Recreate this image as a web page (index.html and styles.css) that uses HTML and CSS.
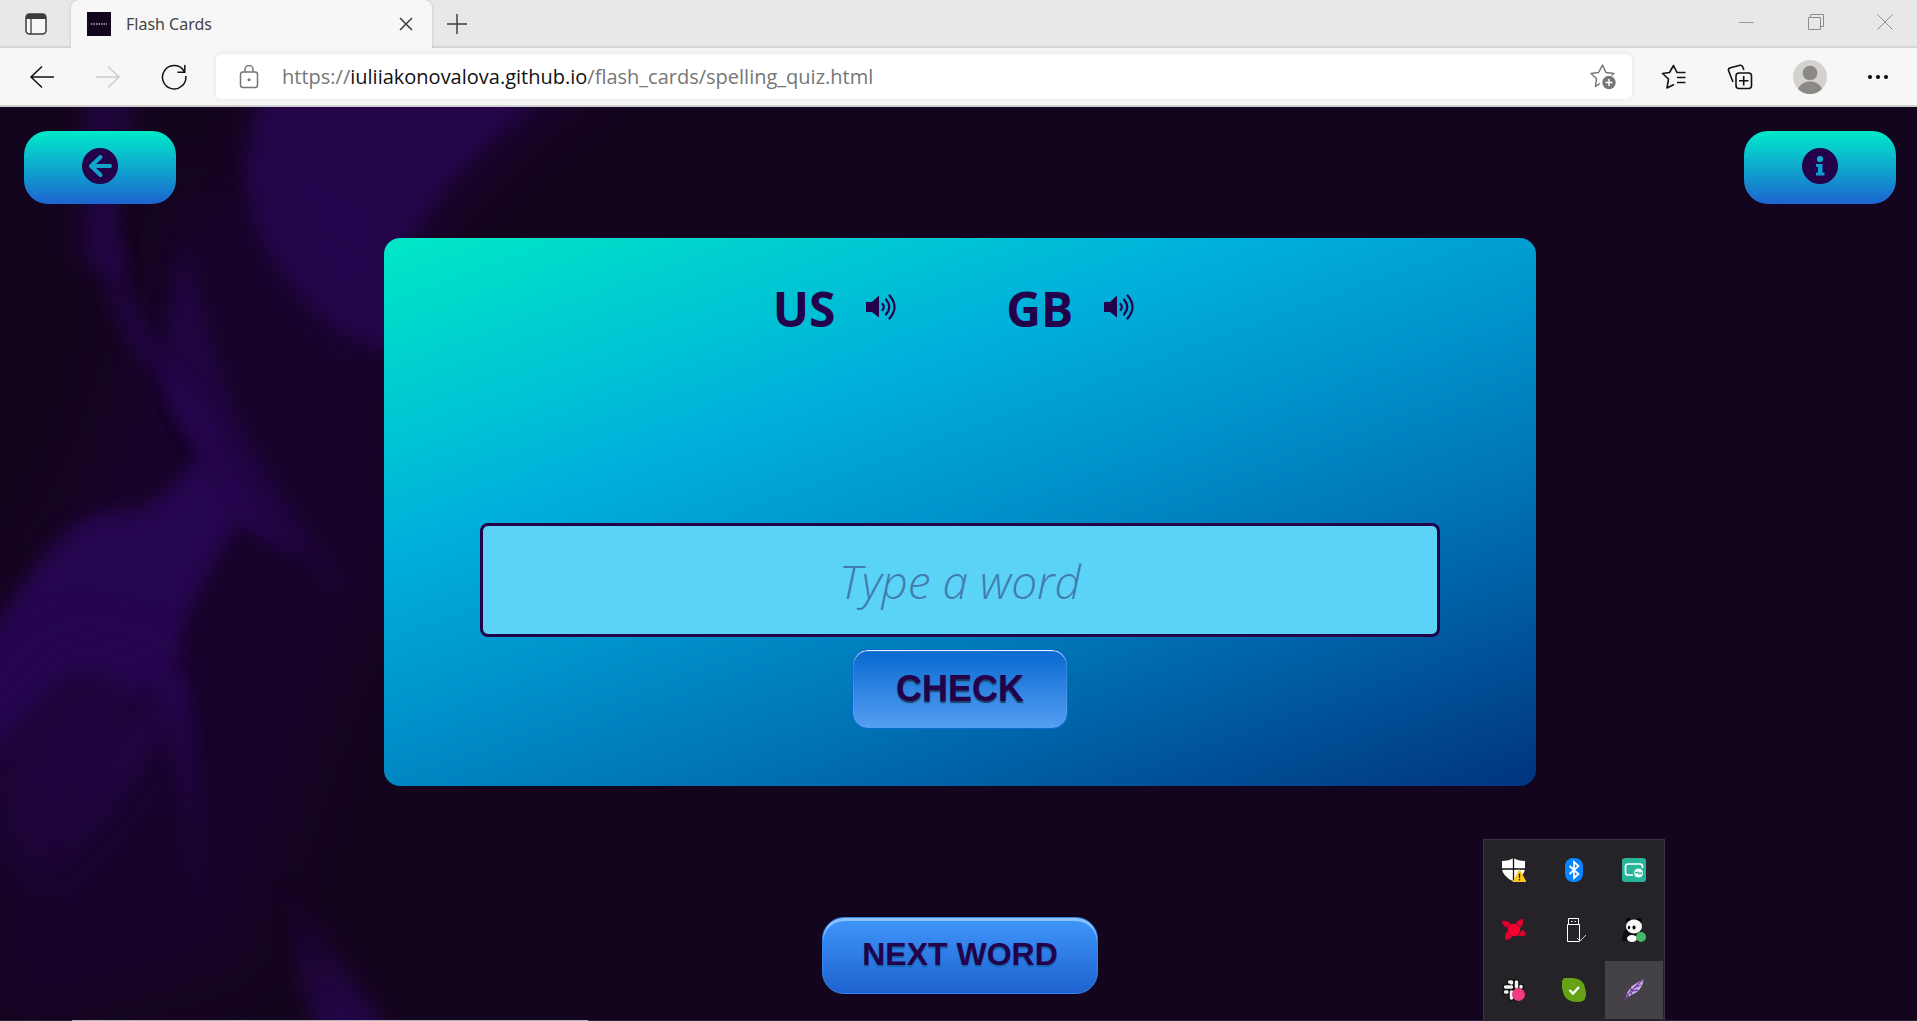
FILE: index.html
```html
<!DOCTYPE html>
<html lang="en">
<head>
<meta charset="utf-8">
<title>Flash Cards</title>
<link rel="stylesheet" href="styles.css">
</head>
<body>
<header class="browser">
  <div class="tab-strip">
    <button class="tab-actions" aria-label="Tab actions">
      <svg width="22" height="22" viewBox="0 0 22 22"><rect x="1" y="1" width="20" height="20" rx="3.500" fill="#f7f7f7" stroke="#3b3b3b" stroke-width="1.500"/><path d="M1 6V4.500A3.500 3.500 0 0 1 4.500 1h13A3.500 3.500 0 0 1 21 4.500V6z" fill="#3b3b3b"/><path d="M6 6v15" stroke="#3b3b3b" stroke-width="1.300"/></svg>
    </button>
    <div class="tab">
      <span class="favicon"><svg width="24" height="24" viewBox="0 0 24 24"><rect width="24" height="24" fill="#14051f"/><path d="M4 12h16" stroke="#8d8496" stroke-width="2" stroke-dasharray="1.500 1"/></svg></span>
      <span class="tab-title">Flash Cards</span>
      <button class="tab-close" aria-label="Close tab"><svg width="14" height="14" viewBox="0 0 14 14"><path d="M1 1l12 12M13 1L1 13" stroke="#3b3b3b" stroke-width="1.500"/></svg></button>
    </div>
    <button class="new-tab" aria-label="New tab"><svg width="22" height="22" viewBox="0 0 22 22"><path d="M11 1v20M1 11h20" stroke="#3b3b3b" stroke-width="1.400"/></svg></button>
    <div class="window-controls">
      <button aria-label="Minimize"><svg width="16" height="16" viewBox="0 0 16 16"><path d="M0 8.500h15" stroke="#999"/></svg></button>
      <button aria-label="Restore"><svg width="16" height="16" viewBox="0 0 16 16"><path d="M.5 3.500h12v12H.5zM2.500 3V.5h13v12H13" fill="none" stroke="#8d8d8d"/></svg></button>
      <button aria-label="Close"><svg width="16" height="16" viewBox="0 0 16 16"><path d="M.5.500l15 15M15.500.500l-15 15" stroke="#8d8d8d"/></svg></button>
    </div>
  </div>
  <div class="toolbar">
    <nav class="nav-buttons">
      <button aria-label="Back"><svg width="26" height="24" viewBox="0 0 26 24"><path d="M25 12H2M13 1.500L2 12l11 10.500" fill="none" stroke="#111" stroke-width="1.500"/></svg></button>
      <button aria-label="Forward"><svg width="26" height="24" viewBox="0 0 26 24"><path d="M1 12h23M13 1.500L24 12 13 22.500" fill="none" stroke="#ccc" stroke-width="1.500"/></svg></button>
      <button aria-label="Refresh"><svg width="26" height="26" viewBox="0 0 26 26"><path d="M24.800 12A11.700 11.700 0 1 1 22.500 6.200L23.800 8M23.800 1v7.200H16.500" fill="none" stroke="#111" stroke-width="1.500"/></svg></button>
    </nav>
    <div class="address">
      <svg width="20" height="24" viewBox="0 0 20 24"><rect x="1.500" y="7" width="17" height="15.500" rx="2.500" fill="none" stroke="#767676" stroke-width="1.500"/><path d="M6 7V4.500a4 4 0 0 1 8 0V7" fill="none" stroke="#767676" stroke-width="1.500"/><circle cx="10" cy="14.700" r="1.500" fill="#767676"/></svg>
      <span class="url">https://<b>iuliiakonovalova.github.io</b>/flash_cards/spelling_quiz.html</span>
      <button class="favorite" aria-label="Add to favorites"><svg width="26" height="26" viewBox="0 0 26 26"><path d="M10 19.500L5.500 22.500l1-8L1 9.500l7.500-1L12.500 1l3.500 7.500 8 1-2.500 2" fill="none" stroke="#767676" stroke-width="1.500" stroke-linejoin="round"/><circle cx="19" cy="18.500" r="6.700" fill="#767676"/><path d="M19 15v7M15.500 18.500h7" stroke="#fff" stroke-width="1.500"/></svg></button>
    </div>
    <div class="tools">
      <button aria-label="Favorites"><svg width="26" height="26" viewBox="0 0 26 26"><path d="M13 20.500L6 24l1.500-9L1.500 9.500l7-1L12.500 1.500l3.500 7h8.500M16 13.500h8.500M16 18.500h8.500" fill="none" stroke="#111" stroke-width="1.600" stroke-linejoin="round"/></svg></button>
      <button aria-label="Collections"><svg width="26" height="26" viewBox="0 0 26 26"><rect x="9" y="9" width="15.500" height="15.500" rx="3" fill="none" stroke="#111" stroke-width="1.600"/><path d="M16.700 12v9.500M12 16.700h9.500M6 18L1.500 6.500Q1 4.500 3.500 3.800L13 1.200Q15 1 15.800 3l1 3" fill="none" stroke="#111" stroke-width="1.600"/></svg></button>
      <button aria-label="Profile"><svg width="34" height="34" viewBox="0 0 34 34"><circle cx="17" cy="17" r="17" fill="#d4d2cf"/><circle cx="17" cy="13" r="7.300" fill="#8c8885"/><path d="M5 29c2-5 7-7.500 12-7.500S27 24 29 29a17 17 0 0 1-24 0z" fill="#8c8885"/></svg></button>
      <button aria-label="Settings and more"><svg width="22" height="6" viewBox="0 0 22 6"><circle cx="3" cy="3" r="2" /><circle cx="11" cy="3" r="2"/><circle cx="19" cy="3" r="2"/></svg></button>
    </div>
  </div>
</header>

<main class="page">
  <svg class="backdrop" viewBox="0 107 1920 913" preserveAspectRatio="xMinYMin slice" aria-hidden="true">
    <defs>
      <filter id="soft" x="-40%" y="-40%" width="180%" height="180%" color-interpolation-filters="sRGB"><feGaussianBlur stdDeviation="9"/></filter>
      <filter id="softer" x="-50%" y="-50%" width="200%" height="200%" color-interpolation-filters="sRGB"><feGaussianBlur stdDeviation="26"/></filter>
      <linearGradient id="fadeDown" x1="0" y1="0" x2="0" y2="1"><stop offset="0" stop-color="#26054f"/><stop offset="1" stop-color="#26054f" stop-opacity="0"/></linearGradient>
      <linearGradient id="fadeUp" x1="0" y1="1" x2="0" y2="0"><stop offset="0" stop-color="#26054f"/><stop offset="1" stop-color="#26054f" stop-opacity="0"/></linearGradient>
    </defs>
    <path d="M190 180L390 300 400 560 330 700 240 960 0 1020V640L100 460z" fill="#19042f" opacity=".7" filter="url(#softer)"/>
    <path d="M85 60h55l-25 160 10 60-45-20z" fill="#26054f" opacity=".55" filter="url(#soft)"/>
    <path d="M285 60C250 150 250 210 285 260 320 310 350 335 400 350V260C440 190 490 140 600 60z" fill="#26054f" filter="url(#softer)" opacity=".7"/>
    <path d="M272 80C235 150 240 210 275 260 310 310 350 345 400 350L405 240C430 190 480 140 570 70z" fill="#26054f" opacity=".8" filter="url(#soft)"/>
    <path d="M92 200C98 300 120 340 160 385L205 450 215 430 178 365C145 330 120 290 115 200z" fill="#26054f" opacity=".6" filter="url(#soft)"/>
    <path d="M185 240C160 320 160 380 185 425L215 470 350 600C300 520 250 450 230 400 210 340 200 300 185 240z" fill="#26054f" opacity=".6" filter="url(#soft)"/>
    <path d="M168 370C175 415 200 445 235 520L300 560C270 520 235 470 205 415z" fill="#26054f" filter="url(#soft)"/>
    <path d="M-20 650C30 570 60 525 106 510 150 520 175 480 204 450L242 510C220 560 185 600 182 635L174 684C145 695 110 690 92 670 55 670 35 710-20 765z" fill="#26054f" filter="url(#soft)"/>
    <path d="M70 640L180 670 140 770C100 820 70 860 45 880 20 870-10 880-20 740z" fill="#26054f" opacity=".5" filter="url(#softer)"/>
    <path d="M172 670L140 720C100 770 70 810 50 880 90 835 150 780 182 690z" fill="url(#fadeDown)" opacity=".6" filter="url(#soft)"/>
    <path d="M160 670C165 730 180 800 195 920 212 860 200 780 188 680z" fill="url(#fadeDown)" opacity=".9" filter="url(#soft)"/>
    <path d="M285 880C290 950 305 1000 325 1050h80C355 990 325 930 285 880z" fill="url(#fadeUp)" filter="url(#soft)"/>
  </svg>

  <div class="top-actions">
    <a class="pill" href="#back" aria-label="Back to menu"><svg width="36" height="36" viewBox="0 0 36 36"><circle cx="18" cy="18" r="18" fill="#23024b"/><path d="M28 18H10M18.500 9L9 18l9.500 9" fill="none" stroke="#0fa5cc" stroke-width="4" stroke-linecap="round" stroke-linejoin="round"/></svg></a>
    <button class="pill" aria-label="Information"><svg width="36" height="36" viewBox="0 0 36 36"><circle cx="18" cy="18" r="18" fill="#23024b"/><circle cx="18" cy="11" r="3.100" fill="#0cafcc"/><path d="M14 16h6.500v8.500H22.500V27.500H14v-3h2V19h-2z" fill="#109cce"/></svg></button>
  </div>

  <section class="card">
    <div class="voices">
      <div class="voice"><span>US</span><button aria-label="Play US pronunciation"><svg width="32" height="28" viewBox="0 0 32 28"><path d="M1 9h6l7-6.500v22L7 19H1z" fill="#23024b"/><path d="M17.500 11a4 4 0 0 1 0 6M21 6.500q6.500 7.500 0 15M24.500 2.500q10 11.500 0 23" fill="none" stroke="#23024b" stroke-width="2.200" stroke-linecap="round"/></svg></button></div>
      <div class="voice"><span>GB</span><button aria-label="Play GB pronunciation"><svg width="32" height="28" viewBox="0 0 32 28"><path d="M1 9h6l7-6.500v22L7 19H1z" fill="#23024b"/><path d="M17.500 11a4 4 0 0 1 0 6M21 6.500q6.500 7.500 0 15M24.500 2.500q10 11.500 0 23" fill="none" stroke="#23024b" stroke-width="2.200" stroke-linecap="round"/></svg></button></div>
    </div>
    <input class="word" type="text" placeholder="Type a word" aria-label="Type a word">
    <button class="check">CHECK</button>
  </section>

  <button class="next">NEXT WORD</button>

  <aside class="tray" aria-label="Notification area">
    <button aria-label="Security"><svg width="24" height="24" viewBox="0 0 24 24"><path d="M0 3Q7 3 11.500 0 16 3 23 3v7q0 8-11.500 13.500Q0 18 0 10z" fill="#fff"/><path d="M11.500 0v23M0 11h23" stroke="#111" stroke-width="1.300"/><path d="M17.500 11L24.500 24h-14z" fill="#ffc517"/><path d="M17.500 15.500v4.500M17.500 21v1.500" stroke="#222" stroke-width="1.300"/></svg></button>
    <button aria-label="Bluetooth"><svg width="24" height="24" viewBox="0 0 24 24"><rect x="3" width="18" height="24" rx="8" fill="#0a84ff"/><path d="M7.500 8l9 8-4.500 4V4l4.500 4-9 8" fill="none" stroke="#fff" stroke-width="1.700"/></svg></button>
    <button aria-label="Screen share"><svg width="24" height="24" viewBox="0 0 24 24"><rect width="24" height="24" rx="3" fill="#27b498"/><path d="M11 17H6q-2.500 0-2.500-2.500v-6Q3.500 6 6 6h12q2.500 0 2.500 2.500V10" fill="none" stroke="#fff" stroke-width="1.700"/><circle cx="16.500" cy="15" r="4.500" fill="#e9fffa"/><path d="M13 15.500q2-2 3.500-.5t3.500-.5" fill="none" stroke="#27b498" stroke-width="1.500"/></svg></button>
    <button aria-label="Antivirus"><svg width="24" height="24" viewBox="0 0 24 24"><path d="M0 3Q5 2 9.500 6L5 10Q0 7 0 3zM21 1Q22 6 18.500 9.500L14 5Q17 1 21 1zM24 17Q20 19 16 17.500L20 12Q24 13 24 17zM3.500 22Q2 17 5 13.500L10.500 18.500Q8 22 3.500 22z" fill="#e0002d"/><circle cx="12" cy="12" r="6.200" fill="#f5002f"/></svg></button>
    <button aria-label="USB device"><svg width="24" height="24" viewBox="0 0 24 24"><path d="M6.500.500h10v6h-10zM5.500 6.500h12v17h-12z" fill="none" stroke="#fff"/><path d="M9 3.500h1.500M12.500 3.500H14" stroke="#fff"/><path d="M15 20l3 3 6-6" fill="none" stroke="#ccc"/></svg></button>
    <button aria-label="Panda"><svg width="24" height="24" viewBox="0 0 24 24"><path d="M3 12h16l3 11H0q0-8 3-11z" fill="#0d0d0f"/><circle cx="6.500" cy="2.500" r="2.500"/><circle cx="17" cy="2.500" r="2.500"/><ellipse cx="12" cy="8.500" rx="8" ry="7" fill="#f7f7f7"/><ellipse cx="7" cy="9.500" rx="1.200" ry="1.800"/><ellipse cx="12" cy="9.500" rx="1.500" ry="2"/><ellipse cx="10" cy="20.500" rx="5" ry="3.500" fill="#fff"/><circle cx="19" cy="19" r="5" fill="#45b86c"/></svg></button>
    <button aria-label="Slack"><svg width="24" height="24" viewBox="0 0 24 24"><path d="M7.500 4h2M9.500 4v1M3.500 9h6M14.500 4v5M19 8.500v.500M3.500 14h1.500M9.500 14v6M14.500 20v.500" stroke="#111" stroke-width="6" stroke-linecap="round"/><path d="M7.500 4h2M9.500 4v1M3.500 9h6M14.500 4v5M19 8.500v.500M3.500 14h1.500M9.500 14v6" stroke="#f0f0f0" stroke-width="3.400" stroke-linecap="round"/><circle cx="16.500" cy="16.500" r="6.500" fill="#f23a82"/></svg></button>
    <button aria-label="Skype"><svg width="24" height="24" viewBox="0 0 24 24"><path d="M3 0h8Q22 1 23 10q2 6 0 11-2 3-7 3Q3 24 1 14-1 6 0 3 1 0 3 0z" fill="#65a315"/><path d="M7.500 12l3.500 3.500 6-6.500" fill="none" stroke="#fff" stroke-width="2.300"/></svg></button>
    <button class="active" aria-label="Feather"><svg width="24" height="24" viewBox="0 0 24 24"><path d="M21.500 1Q21 9 15 14L4 20Q4 15 10 8z" fill="#d0b4ea"/><path d="M21.500 1L9 13 2 23M16 12l-6 1M19 7l-7 3M10 17l-1-3M5 16l1 3M9 10v3" fill="none" stroke="#713fa4" stroke-width="1.300"/></svg></button>
  </aside>
  <div class="edge"><span></span></div>
</main>
</body>
</html>
```
FILE: styles.css
```css
* { box-sizing: border-box; }

body {
  margin: 0;
  min-height: 100vh;
  display: flex;
  flex-direction: column;
  font-family: "Open Sans", "Noto Sans", sans-serif;
  background: #14051f;
  color: #23024b;
}

button {
  padding: 0;
  border: 0;
  background: none;
  font: inherit;
  color: inherit;
}

svg { display: block; flex: none; }

.tab-strip {
  display: flex;
  height: 48px;
  background: #e8e8e8;
  box-shadow: inset 0 -2px 1px #d4d4d4;
}

.tab-actions {
  display: grid;
  place-items: center;
  width: 71px;
}

.tab {
  display: flex;
  align-items: center;
  width: 361px;
  padding: 0 19px 0 16px;
  border-radius: 8px 8px 0 0;
  background: #f7f7f7;
  box-shadow: 0 0 3px #bbb;
  clip-path: inset(0 -3px);
}

.tab-title {
  flex: 1;
  padding-left: 15px;
  font-family: "Noto Sans", sans-serif;
  font-size: 16px;
  color: #444;
}

.new-tab { padding: 0 14px; }

.window-controls {
  display: flex;
  align-items: center;
  gap: 53px;
  margin-left: auto;
  padding: 0 24px 4px 0;
}

.toolbar {
  display: flex;
  align-items: center;
  height: 59px;
  padding-right: 28px;
  border-bottom: 2px solid #d0d0d0;
  background: #f7f7f7;
}

.nav-buttons {
  display: flex;
  align-items: center;
  gap: 40px;
  padding: 0 29px;
}

.address {
  display: flex;
  flex: 1;
  align-items: center;
  height: 45px;
  padding: 0 16px 0 23px;
  border-radius: 6px;
  background: #fff;
  box-shadow: 0 0 6px #e4e4e4;
}

.url {
  flex: 1;
  padding-left: 23px;
  font-size: 20px;
  color: #767676;
}

.url b { font-weight: 400; color: #111; }

.tools {
  display: flex;
  align-items: center;
  gap: 40px;
  padding-left: 29px;
}

.page {
  position: relative;
  flex: 1;
  display: flex;
  flex-direction: column;
  align-items: center;
  padding: 24px 21px 27px 24px;
  overflow: hidden;
}

.backdrop {
  position: absolute;
  inset: 0;
  width: 100%;
  height: 100%;
}

.top-actions,
.card,
.next { position: relative; }

.top-actions {
  display: flex;
  justify-content: space-between;
  align-self: stretch;
}

.pill {
  display: grid;
  place-items: center;
  width: 152px;
  height: 73px;
  padding-bottom: 3px;
  border-radius: 24px;
  background: linear-gradient(#00ebc9, #1d64d1);
}

.card {
  display: flex;
  flex-direction: column;
  align-items: center;
  width: 100%;
  max-width: 1152px;
  margin: 34px 0 131px;
  padding: 38px 96px 57px;
  border-radius: 16px;
  background: linear-gradient(160deg, #00e8c6, #00b1db 32%, #0093cb 50%, #0073b5 68%, #00347f);
}

.voices {
  display: flex;
  gap: 109px;
  padding-right: 12px;
}

.voice {
  display: flex;
  align-items: center;
  gap: 30px;
  font-size: 48px;
  font-weight: 700;
  line-height: 66px;
}

.voice button { padding-bottom: 4px; }

.word {
  width: 100%;
  height: 114px;
  margin: 181px 0 12px;
  padding: 2px 0 0;
  border: 3px solid #23024b;
  border-radius: 8px;
  background: #5bd3f7;
  font: italic 350 46px "Open Sans", "Noto Sans", sans-serif;
  text-align: center;
  color: #23024b;
}

.word::placeholder { color: #427bb0; opacity: 1; }

.check,
.next {
  font-family: "Liberation Sans", Arial, sans-serif;
  font-weight: 700;
  color: #23024b;
}

.check {
  width: 216px;
  height: 80px;
  border: 1px solid #0a6cd0;
  border-radius: 16px;
  background: linear-gradient(#0769d0, #559ff2);
  box-shadow: inset 0 1px 1px #fff;
  font-size: 36px;
  text-shadow: 0 2px 1px #1c4268;
}

.next {
  width: 276px;
  height: 77px;
  padding-bottom: 2px;
  border: 1px solid #3584ec;
  border-radius: 22px;
  background: linear-gradient(#3f97fa, #1e62d0);
  box-shadow: inset 0 3px 0 #90c2ff;
  font-size: 32px;
  text-shadow: 0 2px 1px #1764a8;
}

.tray {
  position: absolute;
  right: 252px;
  bottom: 1px;
  display: grid;
  grid-template-columns: repeat(3, 60px);
  grid-auto-rows: 60px;
  border: 1px solid #3a343f;
  border-bottom: 0;
  background: #252327;
}

.tray button {
  display: grid;
  place-items: center;
  border: 1px solid transparent;
  background-clip: padding-box;
}

.tray .active { background-color: #444246; }

.edge {
  position: absolute;
  inset: auto 0 0;
  height: 1px;
  padding-left: 72px;
  background: #1a2a38;
}

.edge span {
  display: block;
  width: 516px;
  height: 1px;
  background: #b8b5be;
}
```
